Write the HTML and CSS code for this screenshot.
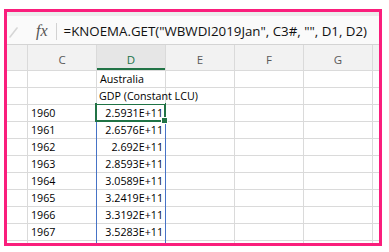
FILE: index.html
```html
<!DOCTYPE html>
<html lang="en">
<head>
    <meta charset="UTF-8">
    <title>Knoema formula</title>
    <link rel="stylesheet" href="styles.css">
</head>
<body>

<div class="frame">
    <div class="toolbar-edge"></div>

    <!-- Formula bar -->
    <div class="formula-bar">
        <svg class="check" width="10" height="12" viewBox="0 0 10 12">
            <path d="M1 11 L8 2" stroke="#d6d6d6" stroke-width="1.6" fill="none" stroke-linecap="round"/>
        </svg>
        <span class="fx">fx</span>
        <span class="sep"></span>
        <span class="formula">=KNOEMA.GET("WBWDI2019Jan", C3#, "", D1, D2)</span>
    </div>

    <!-- Sheet -->
    <div class="sheet">
        <div class="hd"></div>
        <div class="hd">C</div>
        <div class="hd active">D</div>
        <div class="hd">E</div>
        <div class="hd">F</div>
        <div class="hd">G</div>
        <div class="hd"></div>

        <div class="c"></div><div class="c"></div><div class="c">Australia</div><div class="c"></div><div class="c"></div><div class="c"></div><div class="c"></div>
        <div class="c"></div><div class="c"></div><div class="c overflow">GDP (Constant LCU)</div><div class="c"></div><div class="c"></div><div class="c"></div><div class="c"></div>
        <div class="c"></div><div class="c">1960</div><div class="c num">2.5931E+11</div><div class="c"></div><div class="c"></div><div class="c"></div><div class="c"></div>
        <div class="c"></div><div class="c">1961</div><div class="c num">2.6576E+11</div><div class="c"></div><div class="c"></div><div class="c"></div><div class="c"></div>
        <div class="c"></div><div class="c">1962</div><div class="c num">2.692E+11</div><div class="c"></div><div class="c"></div><div class="c"></div><div class="c"></div>
        <div class="c"></div><div class="c">1963</div><div class="c num">2.8593E+11</div><div class="c"></div><div class="c"></div><div class="c"></div><div class="c"></div>
        <div class="c"></div><div class="c">1964</div><div class="c num">3.0589E+11</div><div class="c"></div><div class="c"></div><div class="c"></div><div class="c"></div>
        <div class="c"></div><div class="c">1965</div><div class="c num">3.2419E+11</div><div class="c"></div><div class="c"></div><div class="c"></div><div class="c"></div>
        <div class="c"></div><div class="c">1966</div><div class="c num">3.3192E+11</div><div class="c"></div><div class="c"></div><div class="c"></div><div class="c"></div>
        <div class="c"></div><div class="c">1967</div><div class="c num">3.5283E+11</div><div class="c"></div><div class="c"></div><div class="c"></div><div class="c"></div>
        <div class="c"></div><div class="c"></div><div class="c"></div><div class="c"></div><div class="c"></div><div class="c"></div><div class="c"></div>

        <!-- spill range and active cell -->
        <div class="spill"></div>
        <div class="selection"><span class="handle"></span></div>
    </div>
</div>

</body>
</html>
```

FILE: styles.css
```css
body {
    margin: 0;
    background-color: #fff;
    font-family: 'Open Sans', sans-serif;
}

/* pink highlight round the screenshot */
.frame {
    margin: 9px 0 0 4px;
    width: 372px;
    height: 231px;
    border: 3px solid #fa1e7c;
    display: flex;
    flex-direction: column;
    overflow: hidden;
}

.toolbar-edge {
    height: 4px;
    background-color: #ececec;
}

.formula-bar {
    height: 29px;
    border-bottom: 1px solid #d4d4d4;
    background-color: #fafafa;
    display: flex;
    align-items: center;
    padding-top: 2px;
    box-sizing: border-box;
}

.check {
    margin-left: 2px;
    margin-top: 2px;
}

.fx {
    font-family: 'Liberation Serif', serif;
    font-style: italic;
    font-size: 16px;
    color: #555;
    margin-left: 17px;
}

.sep {
    width: 1px;
    height: 17px;
    background-color: #d2d2d2;
    margin-left: 8px;
}

.formula {
    font-size: 13.3px;
    color: #111;
    margin-left: 7px;
    white-space: nowrap;
}

/* grid */
.sheet {
    position: relative;
    flex: 1;
    display: grid;
    grid-template-columns: 20px repeat(5, 68px) 1fr;
    grid-template-rows: 25px repeat(10, 16px) 1fr;
    gap: 1px;
    background-color: #dadada;
}

.hd {
    background-color: #f2f2f2;
    color: #5a5a5a;
    font-size: 11.5px;
    text-align: center;
    line-height: 29px;
}

.hd.active {
    background-color: #e6e6e6;
    color: #217346;
    border-bottom: 2px solid #217346;
}

.c {
    background-color: #fff;
    font-size: 10.7px;
    line-height: 16px;
    color: #000;
    padding: 0 2px 0 3px;
    white-space: nowrap;
}

.c.overflow {
    overflow: visible;
    position: relative;
    z-index: 1;
    padding-left: 2px;
}

.c.num {
    text-align: right;
}

.spill {
    position: absolute;
    left: 89px;
    top: 76px;
    width: 68px;
    bottom: 0;
    border-left: 1px solid #4673c6;
    border-right: 1px solid #4673c6;
}

.selection {
    position: absolute;
    left: 88px;
    top: 58px;
    width: 67px;
    height: 15px;
    border: 2px solid #217346;
}

.handle {
    position: absolute;
    right: -4px;
    bottom: -4px;
    width: 5px;
    height: 5px;
    background-color: #217346;
    border: 1px solid #fff;
}
```
